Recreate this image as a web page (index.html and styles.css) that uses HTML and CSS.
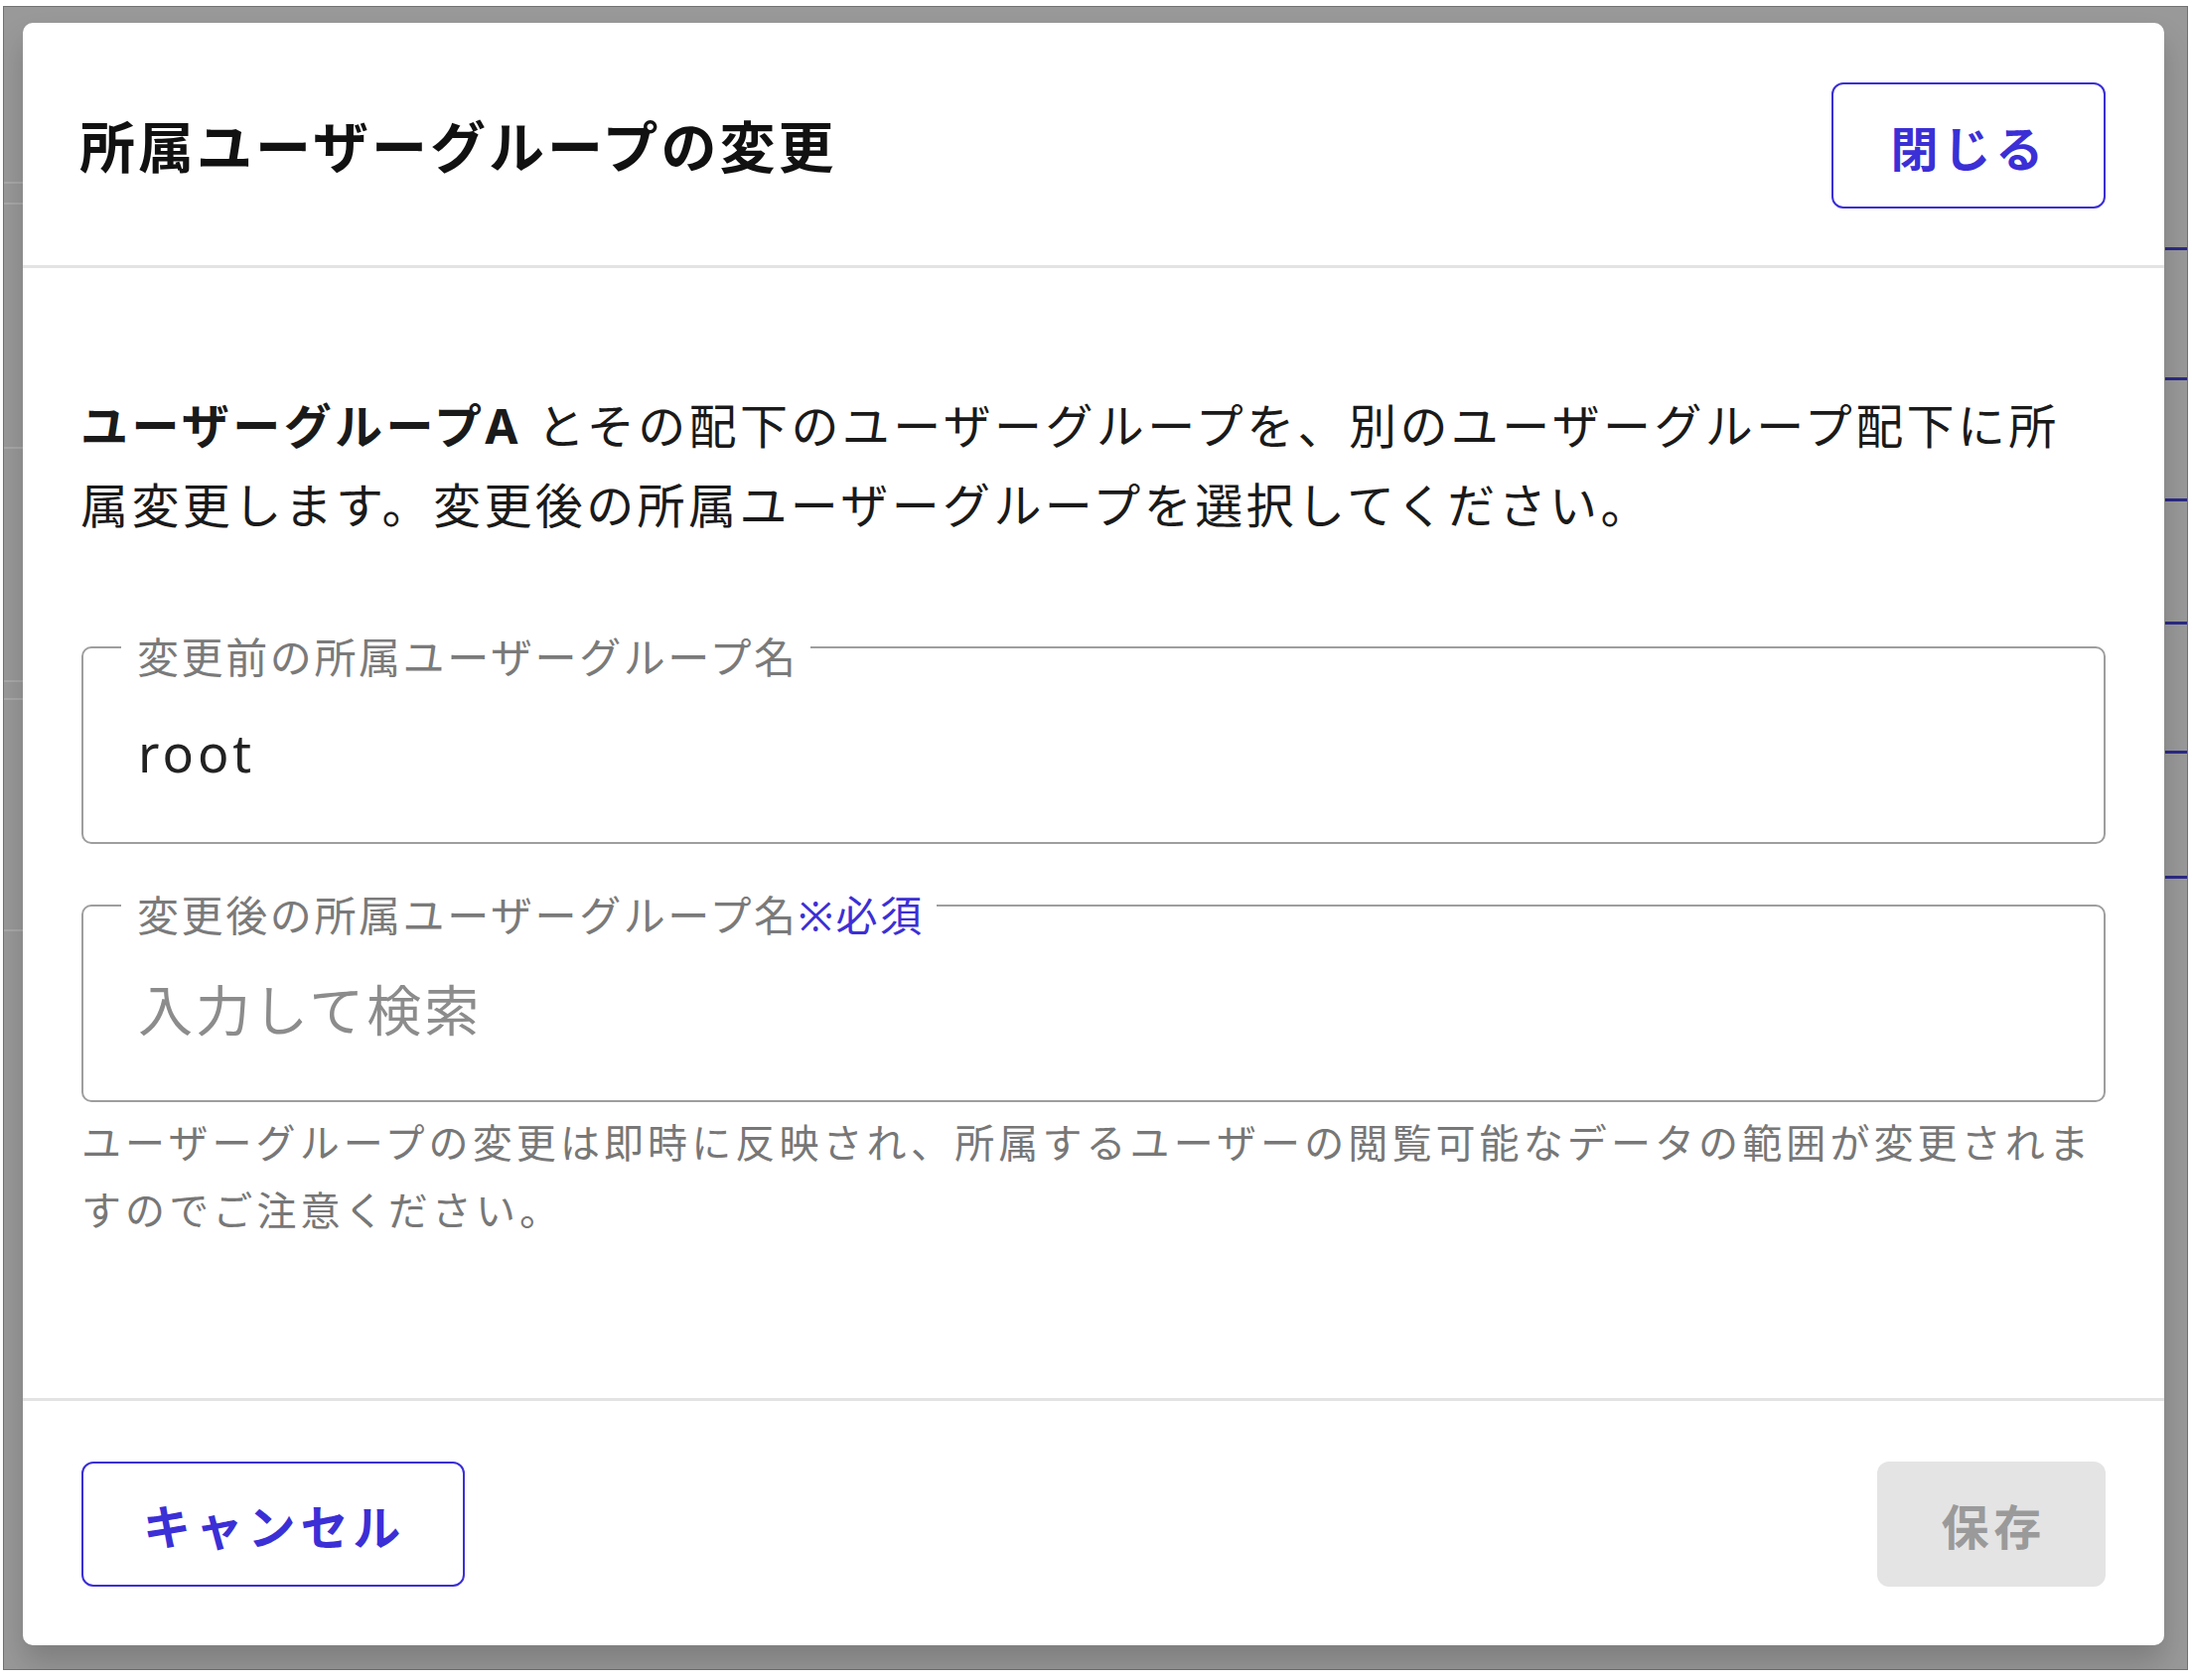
FILE: index.html
```html
<!DOCTYPE html>
<html lang="ja">
<head>
    <meta charset="UTF-8">
    <title>所属ユーザーグループの変更</title>
    <link rel="stylesheet" href="styles.css">
</head>
<body>
    <div class="screen">
        <div class="dialog">
            <div class="dialog-header">
                <h1>所属ユーザーグループの変更</h1>
                <button class="btn btn-outline">閉じる</button>
            </div>

            <div class="dialog-body">
                <p class="lead"><strong>ユーザーグループA</strong> とその配下のユーザーグループを、別のユーザーグループ配下に所属変更します。変更後の所属ユーザーグループを選択してください。</p>

                <fieldset class="field">
                    <legend>変更前の所属ユーザーグループ名</legend>
                    <input type="text" value="root" readonly>
                </fieldset>

                <fieldset class="field field-next">
                    <legend>変更後の所属ユーザーグループ名<span class="required">※必須</span></legend>
                    <input type="text" placeholder="入力して検索">
                </fieldset>

                <p class="help">ユーザーグループの変更は即時に反映され、所属するユーザーの閲覧可能なデータの範囲が変更されますのでご注意ください。</p>
            </div>

            <div class="dialog-footer">
                <button class="btn btn-outline btn-cancel">キャンセル</button>
                <button class="btn btn-disabled" disabled>保存</button>
            </div>
        </div>
    </div>
</body>
</html>
```

FILE: styles.css
```css
body {
    margin: 0;
    background: #fff;
    font-family: "Noto Sans", "Noto Sans CJK JP", sans-serif;
}

/* dimmed page behind the dialog: only its edges show */
.screen {
    box-sizing: border-box;
    display: flex;
    height: 1676px;
    margin: 6px 3px 0 3px;
    padding: 16px 23px 24px 19px;
    border: 1px solid #727272;
    background-color: #999;
    background-image:
        linear-gradient(#2b2a86, #2b2a86),
        linear-gradient(#2b2a86, #2b2a86),
        linear-gradient(#2b2a86, #2b2a86),
        linear-gradient(#2b2a86, #2b2a86),
        linear-gradient(#2b2a86, #2b2a86),
        linear-gradient(#2b2a86, #2b2a86),
        linear-gradient(#a9a9a9, #a9a9a9),
        linear-gradient(#a9a9a9, #a9a9a9),
        linear-gradient(#a9a9a9, #a9a9a9),
        linear-gradient(#a9a9a9, #a9a9a9),
        linear-gradient(#a9a9a9, #a9a9a9),
        linear-gradient(#a9a9a9, #a9a9a9);
    background-repeat: no-repeat;
    background-size:
        22px 3px, 22px 3px, 22px 3px, 22px 3px, 22px 3px, 22px 3px,
        19px 2px, 19px 2px, 19px 2px, 19px 2px, 19px 2px, 19px 2px;
    background-position:
        right 0 top 242px, right 0 top 373px, right 0 top 495px,
        right 0 top 619px, right 0 top 749px, right 0 top 875px,
        left 0 top 176px, left 0 top 197px, left 0 top 443px,
        left 0 top 678px, left 0 top 696px, left 0 top 929px;
}

.dialog {
    display: flex;
    flex-direction: column;
    width: 100%;
    background: #fff;
    border-radius: 10px;
    box-shadow: 0 18px 30px rgba(0, 0, 0, 0.18);
}

.dialog-header {
    display: flex;
    align-items: center;
    justify-content: space-between;
    padding: 60px 59px 57px 57px;
    border-bottom: 3px solid #e3e3e3;
}

h1 {
    margin: 0;
    font-size: 56px;
    line-height: 1;
    letter-spacing: 3px;
    color: #111;
}

.btn {
    height: 127px;
    padding: 0 56px 0 58px;
    font-family: inherit;
    font-size: 48px;
    font-weight: bold;
    letter-spacing: 4.8px;
    border-radius: 12px;
    cursor: pointer;
}

.btn-outline {
    background: #fff;
    color: #3b2fd6;
    border: 2.5px solid #3b2fd6;
}

.btn-cancel {
    height: 126px;
    padding: 0 58px 0 60px;
}

.btn-disabled {
    height: 126px;
    padding: 0 60px 0 64px;
    background: #e4e4e4;
    color: #9a9a9a;
    border: none;
    cursor: default;
}

.dialog-body {
    flex: 1;
    padding: 119px 59px 0 58px;
}

.lead {
    max-width: 2020px;
    margin: 0;
    font-size: 48px;
    line-height: 80px;
    letter-spacing: 3.4px;
    color: #1a1a1a;
}

.field {
    margin: 68px 0 0 1px;
    padding: 0 38px 21px;
    min-width: 0;
    border: 2px solid #9e9e9e;
    border-radius: 10px;
}

.field-next {
    margin-top: 27px;
}

.field legend {
    padding: 20px 12px 0 16px;
    font-size: 42px;
    line-height: 50px;
    letter-spacing: 2.6px;
    color: #7a7a7a;
}

.required {
    color: #3b2fd6;
}

.field input {
    display: block;
    box-sizing: border-box;
    width: 100%;
    height: 140px;
    padding: 0 17px;
    border: 0;
    outline: none;
    font-family: inherit;
    font-size: 52px;
    letter-spacing: 4px;
    color: #222;
    background: transparent;
}

.field input::placeholder {
    font-size: 55px;
    letter-spacing: 3px;
    color: #8c8c8c;
}

.help {
    margin: 7px 0 0 1px;
    font-size: 40px;
    line-height: 68px;
    letter-spacing: 4.1px;
    color: #777;
}

.dialog-footer {
    display: flex;
    align-items: center;
    justify-content: space-between;
    padding: 61px 59px 59px 59px;
    border-top: 3px solid #e3e3e3;
}
```
